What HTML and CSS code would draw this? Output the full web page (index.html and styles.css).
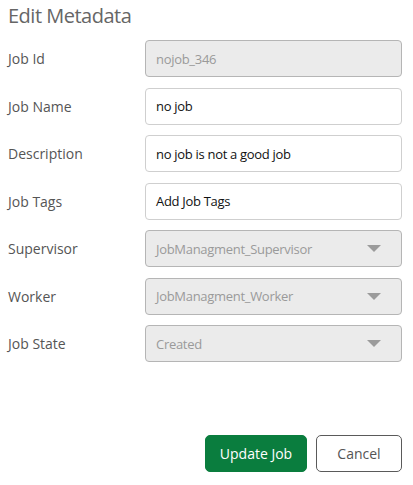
FILE: index.html
```html
<!DOCTYPE html>
<html>
<head>
<meta charset="utf-8">
<link rel="stylesheet" href="styles.css">
</head>
<body>
<div class="dialog">
  <h2 class="title">Edit Metadata</h2>
  <div class="form">
    <label class="label">Job Id</label>
    <div class="field disabled"><span class="value">nojob_346</span></div>
    <label class="label">Job Name</label>
    <div class="field"><span class="value">no job</span></div>
    <label class="label">Description</label>
    <div class="field"><span class="value">no job is not a good job</span></div>
    <label class="label">Job Tags</label>
    <div class="field"><span class="value">Add Job Tags</span></div>
    <label class="label">Supervisor</label>
    <div class="field disabled select"><span class="value">JobManagment_Supervisor</span><span class="caret"></span></div>
    <label class="label">Worker</label>
    <div class="field disabled select"><span class="value">JobManagment_Worker</span><span class="caret"></span></div>
    <label class="label">Job State</label>
    <div class="field disabled select"><span class="value">Created</span><span class="caret"></span></div>
  </div>
  <div class="actions">
    <button class="btn primary">Update Job</button>
    <button class="btn secondary">Cancel</button>
  </div>
</div>
</body>
</html>
```
FILE: styles.css
```css
html, body {
  margin: 0;
  padding: 0;
  background: #ffffff;
}
.dialog {
  width: 413px;
  height: 485px;
  box-sizing: border-box;
  padding: 0 11px 0 8px;
  font-family: "Open Sans", "Noto Sans", sans-serif;
}
.title {
  margin: 0;
  height: 40px;
  line-height: 32px;
  font-size: 20px;
  letter-spacing: -0.5px;
  font-weight: 400;
  color: #666666;
}
.form {
  display: grid;
  grid-template-columns: 137px 257px;
  row-gap: 10.5px;
  align-items: center;
}
.label {
  font-size: 14px;
  color: #555555;
}
.field {
  height: 37px;
  box-sizing: border-box;
  border: 1px solid #cfcfcf;
  border-radius: 4px;
  background: #ffffff;
  display: flex;
  align-items: center;
  padding: 0 10px;
  font-size: 13px;
  letter-spacing: -0.3px;
  color: #111111;
}
.field.disabled {
  background: #ebebeb;
  border-color: #b5b5b5;
  color: #9a9a9a;
}
.value {
  flex: 1;
  white-space: nowrap;
}
.caret {
  width: 0;
  height: 0;
  border-left: 7px solid transparent;
  border-right: 7px solid transparent;
  border-top: 7px solid #9b9b9b;
  margin-right: 10px;
}
.actions {
  display: flex;
  justify-content: flex-end;
  gap: 9px;
  margin-top: 73px;
}
.btn {
  height: 37px;
  border-radius: 5px;
  font-family: "Open Sans", "Noto Sans", sans-serif;
  font-size: 14px;
  padding: 0;
  cursor: pointer;
}
.primary {
  width: 102px;
  background: #0a7d3e;
  border: 1px solid #0a7d3e;
  color: #ffffff;
}
.secondary {
  width: 86px;
  background: #ffffff;
  border: 1px solid #5a5a5a;
  color: #555555;
}
```
